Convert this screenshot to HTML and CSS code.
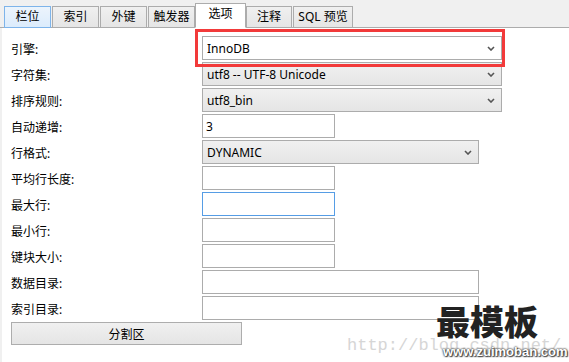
FILE: index.html
```html
<!DOCTYPE html>
<html lang="zh-CN">

<head>
    <meta charset="UTF-8">
    <title>表选项</title>
    <link rel="stylesheet" href="styles.css">
</head>

<body>

    <div class="window">
        <!-- tab strip -->
        <div class="tabs">
            <div class="tab hover">栏位</div>
            <div class="tab">索引</div>
            <div class="tab">外键</div>
            <div class="tab">触发器</div>
            <div class="tab active">选项</div>
            <div class="tab narrow">注释</div>
            <div class="tab sql">SQL 预览</div>
        </div>

        <!-- options panel -->
        <div class="panel">
            <div class="form">
                <label>引擎:</label>
                <div class="select wide plain"><span>InnoDB</span>
                    <svg class="chev" width="8" height="5" viewBox="0 0 8 5"><path d="M1 1 L4 4 L7 1" fill="none" stroke="#555" stroke-width="1.6"/></svg>
                </div>

                <label>字符集:</label>
                <div class="select wide"><span>utf8 -- UTF-8 Unicode</span>
                    <svg class="chev" width="8" height="5" viewBox="0 0 8 5"><path d="M1 1 L4 4 L7 1" fill="none" stroke="#555" stroke-width="1.6"/></svg>
                </div>

                <label>排序规则:</label>
                <div class="select wide"><span>utf8_bin</span>
                    <svg class="chev" width="8" height="5" viewBox="0 0 8 5"><path d="M1 1 L4 4 L7 1" fill="none" stroke="#555" stroke-width="1.6"/></svg>
                </div>

                <label>自动递增:</label>
                <input class="field short" type="text" value="3">

                <label>行格式:</label>
                <div class="select mid"><span>DYNAMIC</span>
                    <svg class="chev" width="8" height="5" viewBox="0 0 8 5"><path d="M1 1 L4 4 L7 1" fill="none" stroke="#555" stroke-width="1.6"/></svg>
                </div>

                <label>平均行长度:</label>
                <input class="field short" type="text">

                <label>最大行:</label>
                <input class="field short focus" type="text">

                <label>最小行:</label>
                <input class="field short" type="text">

                <label>键块大小:</label>
                <input class="field short" type="text">

                <label>数据目录:</label>
                <input class="field mid" type="text">

                <label>索引目录:</label>
                <input class="field mid" type="text">
            </div>

            <button class="btn">分割区</button>

            <!-- annotation box around engine -->
            <div class="mark"></div>

            <!-- watermark -->
            <div class="wm-url">http://blog.csdn.net/</div>
            <div class="wm-title">最模板</div>
            <div class="wm-site">www.zuimoban.com</div>
        </div>
    </div>

</body>

</html>
```

FILE: styles.css
```css
* {
    margin: 0;
    padding: 0;
    box-sizing: border-box;
}

body {
    font-family: "Noto Sans", "Noto Sans CJK SC", sans-serif;
    font-size: 12px;
    color: #000;
    background-color: #f0f0f0;
    width: 569px;
    height: 362px;
    overflow: hidden;
}

.window {
    display: flex;
    flex-direction: column;
    height: 100%;
}

.tabs {
    display: flex;
    align-items: flex-end;
    height: 28px;
    padding-left: 4px;
    border-bottom: 1px solid #acacac;
}

.tab {
    width: 47px;
    height: 22px;
    margin-bottom: -1px;
    margin-right: 1px;
    display: flex;
    align-items: center;
    justify-content: center;
    background: linear-gradient(#f0f0f0, #e5e5e5);
    border: 1px solid #acacac;
    line-height: 1;
    white-space: nowrap;
}

.tab.hover {
    background: linear-gradient(#ecf4fc, #dcecfc);
    border-color: #7eb4ea;
}

.tab.active {
    width: 51px;
    height: 25px;
    background: #fff;
    border-bottom-color: #fff;
    margin-left: -1px;
    margin-right: 0;
    padding-bottom: 3px;
}

.tab.narrow {
    width: 46px;
}

.tab.sql {
    width: 60px;
}

.panel {
    position: relative;
    flex: 1;
    background-color: #fff;
    border-left: 2px solid #f0f0f0;
    padding: 8px 0 0 9px;
}

.form {
    display: grid;
    grid-template-columns: 191px auto;
    grid-auto-rows: 24px;
    row-gap: 2px;
    justify-items: start;
}

.form label {
    display: flex;
    align-items: center;
    padding-top: 1px;
}

.select {
    display: flex;
    align-items: center;
    justify-content: space-between;
    height: 24px;
    padding: 0 6px 0 4px;
    border: 1px solid #acacac;
    background: linear-gradient(#f0f0f0, #e5e5e5);
}

.select.plain {
    background: #fff;
}

.select.wide {
    width: 300px;
}

.select.mid {
    width: 277px;
}

.chev {
    display: block;
}

.field {
    height: 24px;
    border: 1px solid #acacac;
    padding: 0 3px;
    font-family: inherit;
    font-size: 12px;
    background: #fff;
    outline: none;
}

.field.short {
    width: 133px;
}

.field.mid {
    width: 277px;
}

.field.focus {
    border-color: #569de5;
}

.btn {
    display: block;
    margin-top: 2px;
    width: 231px;
    height: 23px;
    border: 1px solid #adadad;
    background: linear-gradient(#f0f0f0, #e5e5e5);
    font-family: inherit;
    font-size: 12px;
    color: #000;
}

.mark {
    position: absolute;
    left: 193px;
    top: 1px;
    width: 310px;
    height: 38px;
    border: 3px solid #f23a3a;
}

.wm-url {
    position: absolute;
    left: 345px;
    top: 308px;
    font-family: "Liberation Mono", monospace;
    font-size: 17px;
    color: #d6d6d6;
}

.wm-title {
    position: absolute;
    left: 434px;
    top: 268px;
    font-family: "Noto Sans CJK SC", sans-serif;
    font-weight: 900;
    font-size: 34px;
    color: #222;
}

.wm-site {
    position: absolute;
    left: 441px;
    top: 316px;
    font-family: "Liberation Sans", sans-serif;
    font-weight: bold;
    font-size: 13px;
    color: #fff;
    text-shadow: 0 0 2px #333, 0 0 2px #333, 1px 1px 1px #555;
}
```
